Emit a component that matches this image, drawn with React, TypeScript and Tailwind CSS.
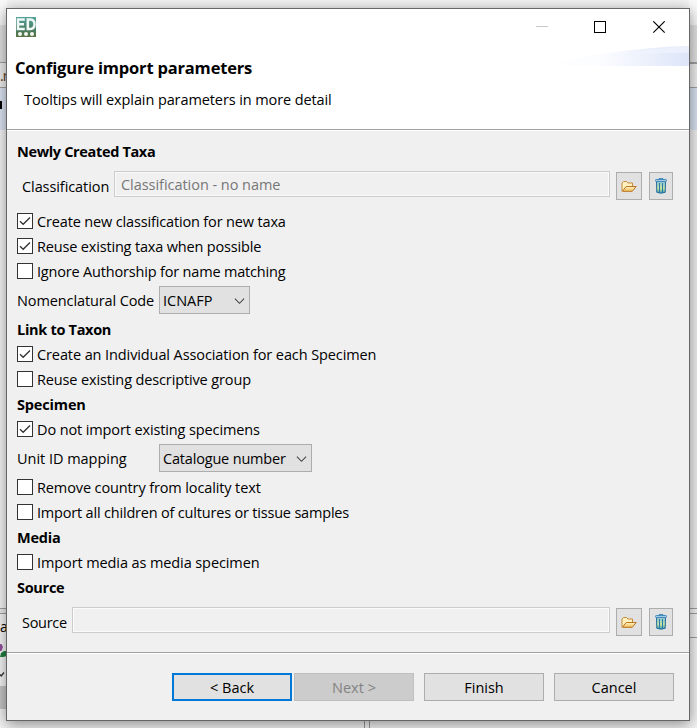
import React from "react";

function Check({ label, on, t }: { label: string; on?: boolean; t: string }) {
  return (
    <label className="flex h-[25px] items-center">
      <span className="mb-px flex size-4 items-center justify-center border border-[#333] bg-white">
        {on && (
          <svg width="14" height="14" viewBox="0 0 14 14" fill="none" stroke="#333" strokeWidth="1.3">
            <path d="M2 7.2 5.2 10.3 12 3.5" />
          </svg>
        )}
      </span>
      <span className={`ml-1 whitespace-nowrap ${t}`}>{label}</span>
    </label>
  );
}

function Heading({ children, t }: { children: string; t: string }) {
  return <h2 className={`flex h-[25px] items-center whitespace-nowrap font-bold ${t}`}>{children}</h2>;
}

function Combo({ label, value, w, t, t2 }: { label: string; value: string; w: string; t: string; t2: string }) {
  return (
    <div className="flex h-[33px] items-start pt-[2px]">
      <span className={`flex h-7 w-[142px] items-center whitespace-nowrap pt-[2px] ${t}`}>{label}</span>
      <button className={`flex h-7 items-center justify-between border border-[#adadad] bg-[#e1e1e1] pl-[3px] pr-[4px] ${w}`}>
        <span className={`whitespace-nowrap pt-[2px] ${t2}`}>{value}</span>
        <svg className="mt-px" width="11" height="8" viewBox="0 0 11 8" fill="none" stroke="#444" strokeWidth="1.1">
          <path d="M.9 1.7 5.5 6.3 10.1 1.7" />
        </svg>
      </button>
    </div>
  );
}

function Folder() {
  return (
    <svg width="16" height="13" viewBox="0 0 16 13">
      <defs>
        <linearGradient id="fold" x1="0" y1="0" x2="0" y2="1">
          <stop offset="0" stopColor="#fff3c4" />
          <stop offset="1" stopColor="#f3bd58" />
        </linearGradient>
      </defs>
      <path d="M1 11V3L2.5 1.5H5.5L7 3H11.5V6" fill="#fff0bd" stroke="#c48a3c" />
      <path d="M1.3 11.3 5.2 6.5H15.2L11.3 11.3Z" fill="url(#fold)" stroke="#b87524" />
    </svg>
  );
}

function Trash() {
  return (
    <svg width="12" height="16" viewBox="0 0 12 16">
      <defs>
        <linearGradient id="bin" x1="0" y1="0" x2="0" y2="1">
          <stop offset="0" stopColor="#8cc4d6" />
          <stop offset=".6" stopColor="#c5e3a2" />
          <stop offset="1" stopColor="#3a98ad" />
        </linearGradient>
      </defs>
      <path d="M1.5 3.5H10.5L10.2 14.3Q6 16 1.8 14.3Z" fill="url(#bin)" stroke="#1d6ba0" />
      <path d="M4.500 5V14.500M7.500 5V14.500" stroke="#2a78a8" />
      <path d="M4 1.5V.7H8V1.5" fill="none" stroke="#2f79b0" />
      <rect x=".5" y="1.5" width="11" height="2" rx=".8" fill="#a3cbe4" stroke="#4389bb" />
    </svg>
  );
}

function FieldRow({ label, value, h, pt, t, t2, w }: { label: string; value: string; h: string; pt: string; t: string; t2: string; w: string }) {
  return (
    <div className={`flex items-start pl-[5px] ${h} ${pt}`}>
      <span className={`mt-[3px] flex h-[26px] items-center whitespace-nowrap ${w} ${t}`}>{label}</span>
      <div className="flex h-[26px] flex-1 items-center border border-[#ccc] pl-[6px] text-[#777] shadow-[inset_0_0_0_1px_#fafafa]">
        <span className={`whitespace-nowrap pt-[2px] ${t2}`}>{value}</span>
      </div>
      <button className="ml-[6px] mt-px flex h-7 w-[26px] items-center justify-center border border-[#adadad] bg-[#e1e1e1]"><Folder /></button>
      <button className="ml-[7px] mt-px flex h-7 w-6 items-center justify-center border border-[#adadad] bg-[#e1e1e1]"><Trash /></button>
    </div>
  );
}

function Backdrop() {
  return (
    <div className="absolute inset-0 flex justify-between overflow-hidden bg-[#f4f4f4]">
      <div className="flex w-[7px] flex-col text-[14px] leading-none">
        <div className="h-[25px] bg-[#fafafa]" />
        <div className="h-[38px] border-b border-[#a0a0a0] bg-[#e3e3e3]" />
        <div className="h-[25px] border-b border-[#a0a0a0] bg-[#f0f0f0] pt-[6px] text-[#5a3c20]"><span className="tracking-[-1px]">.r</span></div>
        <div className="h-[42px] bg-[#dfe6f5] pt-[13px]"><div className="h-2 w-[2px] bg-black" /></div>
        <div className="h-[478px] bg-[#f8f8f8]" />
        <div className="h-[6px] border-y border-[#a0a0a0] bg-[#eee]" />
        <div className="h-[72px] bg-[#f8f8f8] pt-[6px]">
          <div className="w-5 tracking-[-1.5px]">ac</div>
          <svg width="7" height="48" viewBox="0 0 7 48">
            <path d="M0 10 1.500 10 3 13 1.500 17 0 17Z" fill="#93529f" />
            <path d="M0 23 1 19 4 17H7V22L3 23Z" fill="#218041" />
            <path d="M0 40.500 1.200 42 4 38.500" fill="none" stroke="#333" strokeWidth="1.3" />
          </svg>
        </div>
        <div className="h-[23px] bg-[#c8c8c8]" />
      </div>
      <div className="flex flex-1 items-end justify-center">
        <div className="ml-[38px] h-2 w-[6px] border-x border-[#999]" />
      </div>
      <div className="flex w-2 flex-col">
        <div className="h-[25px] bg-[#fafafa]" />
        <div className="h-[39px] border-b-2 border-[#a0a0a0] bg-[#e3e3e3]" />
        <div className="h-6 border-b border-[#a0a0a0] bg-[#f0f0f0]" />
        <div className="h-[42px] bg-[#d8e3f2]" />
        <div className="h-[478px] bg-[#f0f0f0]" />
        <div className="h-[6px] border-y border-[#a0a0a0]" />
        <div className="h-6 border-b border-[#a0a0a0]" />
      </div>
    </div>
  );
}

export default function App() {
  return (
    <div className="relative h-[728px] w-[697px] overflow-hidden font-['Open_Sans','Noto_Sans',sans-serif] text-[14.5px] leading-5 text-black">
      <Backdrop />
      <main className="absolute left-[6px] top-2 flex h-[713px] w-[684px] flex-col border border-[#666] bg-[#f0f0f0] shadow-[0_3px_14px_rgba(0,0,0,.45)]">
        <header className="flex h-[122px] flex-col border-b border-white bg-white">
          <div className="flex h-[37px] shrink-0 items-start justify-between pl-[9px] pr-[23px]">
            <svg className="mt-2" width="20" height="20" viewBox="0 0 20 20">
              <defs>
                <linearGradient id="logo" x1="0" y1="0" x2="0" y2="1">
                  <stop offset="0" stopColor="#55a39d" />
                  <stop offset=".65" stopColor="#497c61" />
                  <stop offset="1" stopColor="#5b7342" />
                </linearGradient>
              </defs>
              <rect width="20" height="20" fill="url(#logo)" />
              <path d="M8.800 2.500H2V12H8.800M2 7.200H8M11.800 2.500V12H14.500Q18.500 11.500 18.500 7.200T14.500 2.500Z" fill="none" stroke="#f0f8f6" strokeWidth="2.500" />
              <g fill="#f3f7ef"><circle cx="4" cy="17" r="2" /><circle cx="10" cy="17" r="2" /><circle cx="16" cy="17" r="2" /></g>
            </svg>
            <svg className="mt-3" width="130" height="13" viewBox="0 0 130 13" fill="none">
              <path d="M0 5.5H12" stroke="#c8c8c8" />
              <rect x="58.5" y=".5" width="11" height="11" stroke="#000" />
              <path d="m117.3.3 11.4 11.4M128.7.3 117.3 11.7" stroke="#000" strokeWidth="1.1" />
            </svg>
          </div>
          <div className="flex h-[84px] justify-between border-b border-[#a0a0a0]">
            <div className="pl-2">
              <h1 className="mt-[11px] whitespace-nowrap text-[16.5px] font-bold leading-[22px] tracking-[-0.18px]">Configure import parameters</h1>
              <p className="ml-[9px] mt-[11px] whitespace-nowrap tracking-[-0.1px]">Tooltips will explain parameters in more detail</p>
            </div>
            <svg width="142" height="20" viewBox="0 0 142 20">
              <defs>
                <linearGradient id="swoosh">
                  <stop offset="0" stopColor="#fff" />
                  <stop offset=".4" stopColor="#fbfcff" />
                  <stop offset="1" stopColor="#dde5f8" />
                </linearGradient>
              </defs>
              <path d="M0 20Q65 2 142 0V20Z" fill="url(#swoosh)" />
              <path d="M70 11Q105 2 142 0V7Q105 6 70 11Z" fill="#f0f3fd" opacity=".7" />
            </svg>
          </div>
        </header>
        <section className="h-[521px] pl-[10px] pr-4 pt-2">
          <Heading t="tracking-[-0.34px]">Newly Created Taxa</Heading>
          <FieldRow label="Classification" value="Classification - no name" h="h-[45px]" pt="pt-[7px]" w="w-[92px]" t="tracking-[-0.08px]" t2="tracking-[-0.04px]" />
          <Check on label="Create new classification for new taxa" t="tracking-[-0.15px]" />
          <Check on label="Reuse existing taxa when possible" t="tracking-[-0.17px]" />
          <Check label="Ignore Authorship for name matching" t="tracking-[-0.18px]" />
          <Combo label="Nomenclatural Code" value="ICNAFP" w="w-[91px]" t="tracking-[-0.11px]" t2="" />
          <Heading t="tracking-[-0.3px]">Link to Taxon</Heading>
          <Check on label="Create an Individual Association for each Specimen" t="tracking-[-0.1px]" />
          <Check label="Reuse existing descriptive group" t="tracking-[-0.13px]" />
          <Heading t="tracking-[-0.15px]">Specimen</Heading>
          <Check on label="Do not import existing specimens" t="tracking-[-0.12px]" />
          <Combo label="Unit ID mapping" value="Catalogue number" w="w-[153px]" t="tracking-[-0.03px]" t2="tracking-[-0.18px]" />
          <Check label="Remove country from locality text" t="tracking-[-0.12px]" />
          <Check label="Import all children of cultures or tissue samples" t="tracking-[-0.19px]" />
          <Heading t="tracking-[-0.2px]">Media</Heading>
          <Check label="Import media as media specimen" t="tracking-[-0.1px]" />
          <Heading t="tracking-[-0.3px]">Source</Heading>
          <FieldRow label="Source" value="" h="h-[52px]" pt="pt-[7px]" w="w-[50px]" t="tracking-[-0.3px]" t2="" />
        </section>
        <footer className="flex flex-1 justify-end border-t border-[#a0a0a0] pr-[15px] pt-5 shadow-[inset_0_1px_0_#fff]">
          <button className="h-7 w-[120px] border-2 border-[#0078d7] bg-[#e1e1e1] pt-[2px]">&lt; Back</button>
          <button className="ml-[2px] h-7 w-[120px] border border-[#bfbfbf] bg-[#ccc] pt-[2px] text-[#838383]">Next &gt;</button>
          <button className="ml-[10px] h-7 w-[120px] border border-[#adadad] bg-[#e1e1e1] pt-[2px]">Finish</button>
          <button className="ml-[10px] h-7 w-[120px] border border-[#adadad] bg-[#e1e1e1] pt-[2px]">Cancel</button>
        </footer>
      </main>
    </div>
  );
}
